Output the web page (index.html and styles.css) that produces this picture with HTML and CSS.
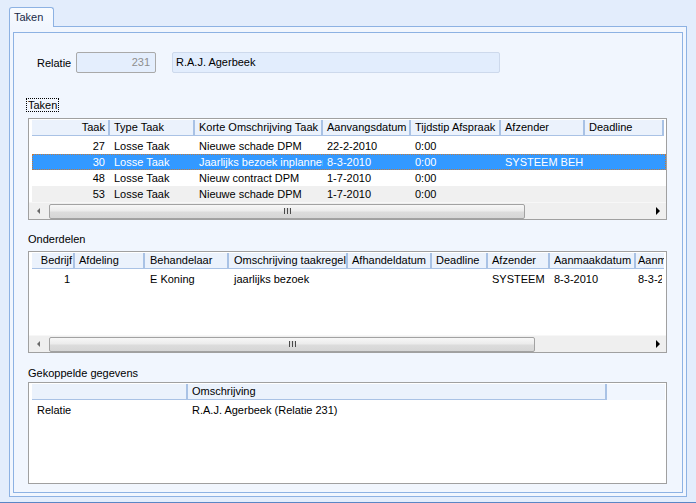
FILE: index.html
```html
<!DOCTYPE html>
<html>
<head>
<meta charset="utf-8">
<link rel="stylesheet" href="styles.css">
</head>
<body>
<div class="tabstrip"><div class="tab">Taken</div></div>
<div class="frame">
  <div class="inner">
    <div class="relrow">
      <span class="rel-label">Relatie</span>
      <div class="inp inp-num">231</div>
      <div class="inp inp-name">R.A.J. Agerbeek</div>
    </div>

    <div class="sec-label focus">Taken</div>
    <div class="grid g1">
      <div class="hdr cols1">
        <div class="hc right">Taak</div>
        <div class="hc">Type Taak</div>
        <div class="hc">Korte Omschrijving Taak</div>
        <div class="hc">Aanvangsdatum</div>
        <div class="hc">Tijdstip Afspraak</div>
        <div class="hc">Afzender</div>
        <div class="hc">Deadline</div>
      </div>
      <div class="body">
        <div class="row cols1">
          <div class="c right">27</div><div class="c">Losse Taak</div><div class="c">Nieuwe schade DPM</div><div class="c">22-2-2010</div><div class="c">0:00</div><div class="c"></div><div class="c"></div>
        </div>
        <div class="row cols1 sel">
          <div class="c right">30</div><div class="c">Losse Taak</div><div class="c">Jaarlijks bezoek inplannen</div><div class="c">8-3-2010</div><div class="c">0:00</div><div class="c">SYSTEEM BEH</div><div class="c"></div>
        </div>
        <div class="row cols1">
          <div class="c right">48</div><div class="c">Losse Taak</div><div class="c">Nieuw contract DPM</div><div class="c">1-7-2010</div><div class="c">0:00</div><div class="c"></div><div class="c"></div>
        </div>
        <div class="row cols1 alt">
          <div class="c right">53</div><div class="c">Losse Taak</div><div class="c">Nieuwe schade DPM</div><div class="c">1-7-2010</div><div class="c">0:00</div><div class="c"></div><div class="c"></div>
        </div>
      </div>
      <div class="hscroll">
        <span class="arr-l"></span>
        <div class="thumb thumb1"><span class="grip"></span></div>
        <span class="track"></span>
        <span class="arr-r"></span>
      </div>
    </div>

    <div class="sec-label sec2">Onderdelen</div>
    <div class="grid g2">
      <div class="hdr cols2">
        <div class="hc right tight">Bedrijf</div>
        <div class="hc">Afdeling</div>
        <div class="hc p5">Behandelaar</div>
        <div class="hc p5">Omschrijving taakregel</div>
        <div class="hc">Afhandeldatum</div>
        <div class="hc">Deadline</div>
        <div class="hc">Afzender</div>
        <div class="hc">Aanmaakdatum</div>
        <div class="hc p2">Aanmaakdatum</div>
      </div>
      <div class="body">
        <div class="row cols2">
          <div class="c right">1</div><div class="c"></div><div class="c p5">E Koning</div><div class="c p5">jaarlijks bezoek</div><div class="c"></div><div class="c"></div><div class="c">SYSTEEM</div><div class="c">8-3-2010</div><div class="c p2">8-3-2010</div>
        </div>
      </div>
      <div class="hscroll">
        <span class="arr-l"></span>
        <div class="thumb thumb2"><span class="grip"></span></div>
        <span class="track"></span>
        <span class="arr-r"></span>
      </div>
    </div>

    <div class="sec-label sec3">Gekoppelde gegevens</div>
    <div class="grid g3">
      <div class="hdr cols3">
        <div class="hc"></div>
        <div class="hc">Omschrijving</div>
        <div class="hc tail"></div>
      </div>
      <div class="body">
        <div class="row cols3">
          <div class="c p5">Relatie</div><div class="c">R.A.J. Agerbeek (Relatie 231)</div><div class="c"></div>
        </div>
      </div>
    </div>
  </div>
</div>
<div class="statusline"></div>
</body>
</html>
```

FILE: styles.css
```css
* { box-sizing: border-box; }
html, body { margin: 0; padding: 0; }
body {
  width: 696px;
  height: 503px;
  overflow: hidden;
  background: #e3edfc;
  font-family: "Liberation Sans", Arial, sans-serif;
  font-size: 11px;
  color: #000;
}

.tabstrip {
  height: 26px;
  padding: 7px 0 0 9px;
  display: flex;
  align-items: flex-end;
}
.tab {
  position: relative;
  z-index: 1;
  width: 45px;
  height: 20px;
  margin-bottom: -1px;
  border: 1px solid #8db2e3;
  border-bottom: none;
  border-radius: 3px 3px 0 0;
  background: linear-gradient(#f8fbff, #f1f6fe);
  padding: 2px 0 0 4px;
  line-height: 14px;
  font-size: 11px;
  color: #1a2a48;
}

.frame {
  margin-left: 9px;
  width: 678px;
  height: 471px;
  border: 1px solid #8db2e3;
  background: #f1f6fe;
  padding: 5px 3px 3px 3px;
}
.inner {
  height: 100%;
  border: 1px solid #8db2e3;
  padding: 0 15px 0 14px;
  display: flex;
  flex-direction: column;
}

.relrow {
  margin: 19px 0 0 9px;
  height: 21px;
  display: flex;
  align-items: center;
}
.rel-label { width: 39px; line-height: 14px; padding-top: 1px; }
.inp {
  height: 21px;
  line-height: 19px;
  border-radius: 2px;
  white-space: nowrap;
}
.inp-num {
  width: 80px;
  border: 1px solid #a9a9a9;
  background: #e4eefd;
  color: #8e8e8e;
  text-align: right;
  padding-right: 5px;
}
.inp-name {
  width: 328px;
  margin-left: 16px;
  border: 1px solid #cdd9ec;
  background: #e2edfd;
  padding-left: 3px;
}

.sec-label {
  height: 14px;
  line-height: 12px;
  align-self: flex-start;
}
.focus {
  margin: 25px 0 0 -2px;
  border: 1px dotted #000;
  padding: 0 1px;
}
.sec2 { margin-top: 12px; line-height: 14px; }
.sec3 { margin-top: 13px; line-height: 14px; }

.grid {
  height: 102px;
  border: 1px solid #a0a0a0;
  background: #fff;
  padding-top: 1px;
  overflow: hidden;
  flex: none;
}
.g1 { margin-top: 6px; }
.g2 { margin-top: 5px; }
.g3 { margin-top: 2px; }

.hdr, .body { margin-left: 3px; }
.hdr {
  display: grid;
  height: 16px;
  margin-bottom: 2px;
  overflow: hidden;
}
.g2 .hdr { width: 632px; }
.g2 .body { width: 630px; }
.body { height: 64px; overflow: hidden; }
.g3 .body { height: auto; }
.row { display: grid; height: 16px; }

.cols1 { grid-template-columns: 78px 85px 128px 88px 90px 84px 79px; }
.cols2 { grid-template-columns: 43px 70px 84px 119px 84px 56px 62px 86px 80px; }
.cols3 { grid-template-columns: 156px 419px 58px; }

.hc {
  background: #ebf2fc;
  border-right: 2px solid #a9c2e5;
  border-bottom: 1px solid #a9c2e5;
  line-height: 15px;
  padding-left: 4px;
  white-space: nowrap;
  overflow: hidden;
}
.hc.tail { border: none; background: #f1f6fe; }
.c {
  line-height: 16px;
  padding-left: 4px;
  white-space: nowrap;
  overflow: hidden;
}
.right { text-align: right; padding-left: 0; padding-right: 5px; }
.hc.right { padding-right: 3px; }
.hc.tight { padding-right: 1px; }
.p5 { padding-left: 5px; }
.p2 { padding-left: 2px; }

.sel {
  background: #3399ff;
  color: #fff;
  outline: 1px dotted #c47a3a;
  outline-offset: -1px;
}
.alt { background: #f0f0f0; }

.hscroll {
  height: 17px;
  display: flex;
  align-items: center;
  background: #efefef;
  border-top: 1px solid #f7f7f7;
}
.arr-l {
  width: 0; height: 0;
  margin-left: 8px;
  border-right: 3px solid #6a6a6a;
  border-top: 3px solid transparent;
  border-bottom: 3px solid transparent;
}
.thumb {
  margin-left: 9px;
  height: 15px;
  border: 1px solid #a2a2a2;
  border-radius: 2px;
  background: linear-gradient(#f7f7f7 0%, #ececec 45%, #dcdcdc 55%, #d6d6d6 100%);
  display: flex;
  align-items: center;
  justify-content: center;
}
.thumb1 { width: 476px; }
.thumb2 { width: 486px; }
.grip {
  width: 7px;
  height: 6px;
  background: repeating-linear-gradient(90deg, #4a4a4a 0 1px, #dcdcdc 1px 3px);
}
.track { flex: 1; }
.arr-r {
  width: 0; height: 0;
  margin-right: 6px;
  border-left: 4px solid #000;
  border-top: 4px solid transparent;
  border-bottom: 4px solid transparent;
}

.statusline {
  margin-top: 5px;
  height: 1px;
  background: #5a86c5;
}
```
